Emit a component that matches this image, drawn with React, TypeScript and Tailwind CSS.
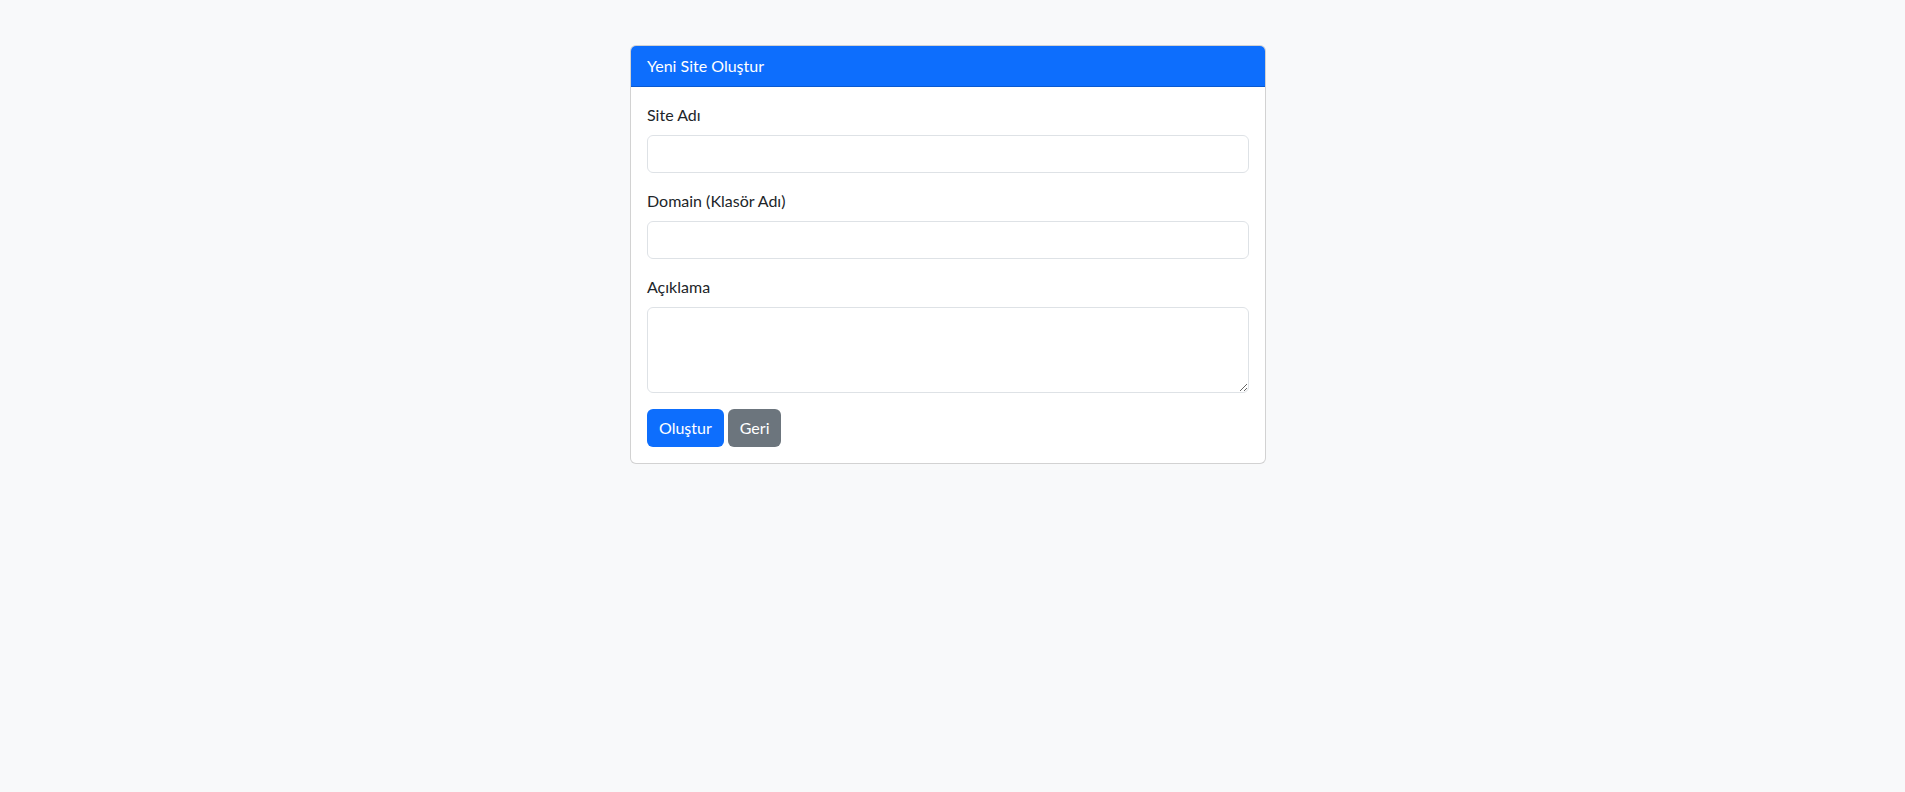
import React from 'react';

const font = { fontFamily: 'Lato, "Noto Sans", "Liberation Sans", sans-serif' };

const Field: React.FC<{ label: string; id: string; textarea?: boolean }> = ({ label, id, textarea }) => (
  <div className="mb-4">
    <label htmlFor={id} className="block mb-2 text-base leading-6 text-[#212529]">
      {label}
    </label>
    {textarea ? (
      <textarea
        id={id}
        rows={3}
        className="block w-full h-[86px] rounded-[6px] border border-[#dee2e6] bg-white px-3 py-1.5 text-base leading-6 text-[#212529] outline-none"
      />
    ) : (
      <input
        id={id}
        type="text"
        className="block w-full h-[38px] rounded-[6px] border border-[#dee2e6] bg-white px-3 py-1.5 text-base leading-6 text-[#212529] outline-none"
      />
    )}
  </div>
);

export default function App() {
  return (
    <div className="min-h-screen w-full bg-[#f8f9fa]" style={font}>
      <div className="w-[1896px] flex justify-center pt-[45px]">
        <div className="w-[636px] rounded-[6px] border border-black/[0.175] bg-white overflow-hidden">
          {/* Header */}
          <div className="bg-[#0d6efd] px-4 py-2 text-base leading-6 text-white border-b border-black/[0.175]">
            Yeni Site Oluştur
          </div>

          {/* Body */}
          <div className="p-4">
            <form onSubmit={e => e.preventDefault()}>
              <Field id="name" label="Site Adı" />
              <Field id="domain" label="Domain (Klasör Adı)" />
              <Field id="desc" label="Açıklama" textarea />
              <div className="flex gap-1">
                <button
                  type="submit"
                  className="h-[38px] rounded-[6px] bg-[#0d6efd] px-3 text-base leading-6 text-white"
                >
                  Oluştur
                </button>
                <button
                  type="button"
                  className="h-[38px] rounded-[6px] bg-[#6c757d] px-3 text-base leading-6 text-white"
                >
                  Geri
                </button>
              </div>
            </form>
          </div>
        </div>
      </div>
    </div>
  );
}
